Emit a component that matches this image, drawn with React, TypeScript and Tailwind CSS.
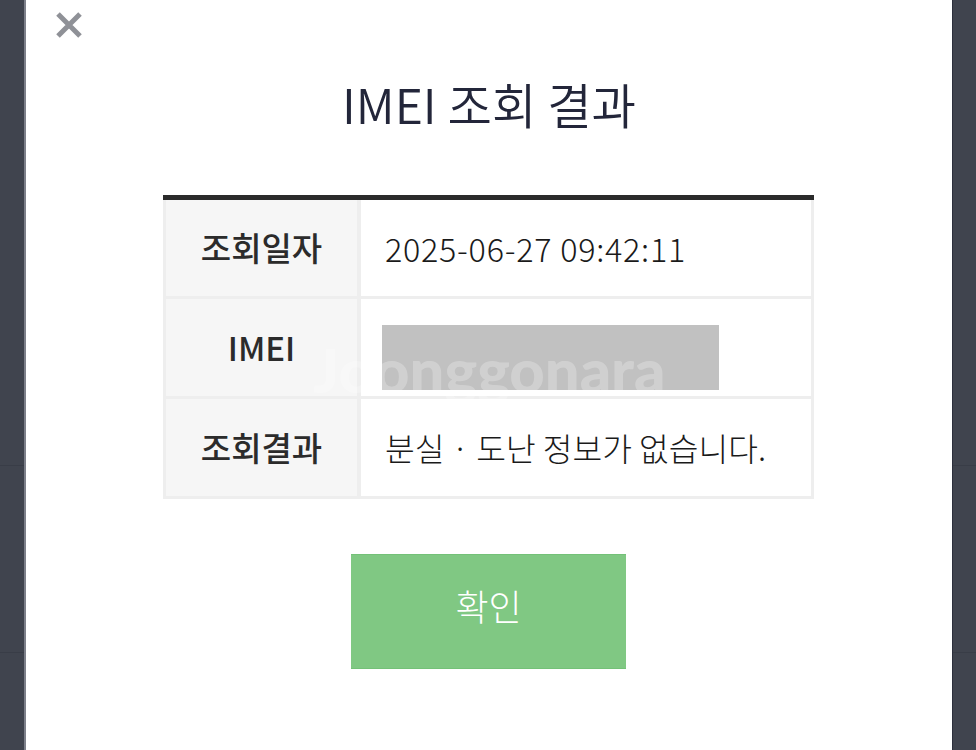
import React from 'react';

const FONT = "font-['Noto_Sans_CJK_KR','Noto_Sans',sans-serif]";

const Gutter = () => (
    <div className="w-full flex flex-col">
        <div className="h-[466px] border-b border-[#393d47]" />
        <div className="h-[187px] border-b border-[#393d47]" />
    </div>
);

const Row = ({ label, height, children, last }: { label: string; height: string; children: React.ReactNode; last?: boolean }) => (
    <div className={`flex ${height} border-[#eeeeee] ${last ? '' : 'border-b-[3px]'}`}>
        <div className="w-[195px] shrink-0 flex items-center justify-center bg-[#f6f6f6] border-r-[4px] border-[#eeeeee] text-[33px] font-medium text-[#2b2b2b]">
            {label}
        </div>
        <div className="flex-1 flex items-center pl-[24px] text-[32.3px] font-light text-[#1a1a1a]">{children}</div>
    </div>
);

export default function App() {
    return (
        <div className={`${FONT} relative w-[976px] h-[750px] overflow-hidden flex bg-[#40444e]`}>
            <div className="w-[24px] shrink-0"><Gutter /></div>
            <div className="w-[928px] shrink-0 bg-white border-l-2 border-[#7d808a] flex flex-col items-center relative">
                <button className="absolute left-[28px] top-[10px] text-[#8f9197]">
                    <svg width="30" height="30" viewBox="0 0 30 30">
                        <path d="M4 4 L26 26 M26 4 L4 26" stroke="currentColor" strokeWidth="5" fill="none" />
                    </svg>
                </button>
                <h1 className="mt-[70px] h-[66px] flex items-center text-[48.3px] font-[350] leading-none text-[#23263a]">
                    IMEI 조회 결과
                </h1>
                <div className="mt-[59px] w-[651px] -ml-[1px] border-t-[5px] border-[#2b2b2b]">
                    <div className="border-x-[3px] border-b-[3px] border-[#eeeeee]">
                        <Row label="조회일자" height="h-[99px]">
                            <span className="tracking-[0.75px]">2025-06-27 09:42:11</span>
                        </Row>
                        <Row label="IMEI" height="h-[100px]">
                            <div className="-ml-[3px] mt-[19px] w-[337px] h-[65px] bg-[#c1c1c1]" />
                        </Row>
                        <Row label="조회결과" height="h-[97px]" last>분실 · 도난 정보가 없습니다.</Row>
                    </div>
                </div>
                <button className="mt-[55px] -ml-[1px] w-[275px] h-[115px] pb-[14px] bg-[#80c883] border-y border-[#74c178] text-white text-[36px] font-light leading-none">
                    확인
                </button>
            </div>
            <div className="flex-1 border-l border-[#2c2f3c]"><Gutter /></div>
            <div className="absolute left-[313px] top-[339px] font-['Lato',sans-serif] font-black text-[61.5px] leading-none text-white/25 pointer-events-none">
                Joonggonara
            </div>
        </div>
    );
}
